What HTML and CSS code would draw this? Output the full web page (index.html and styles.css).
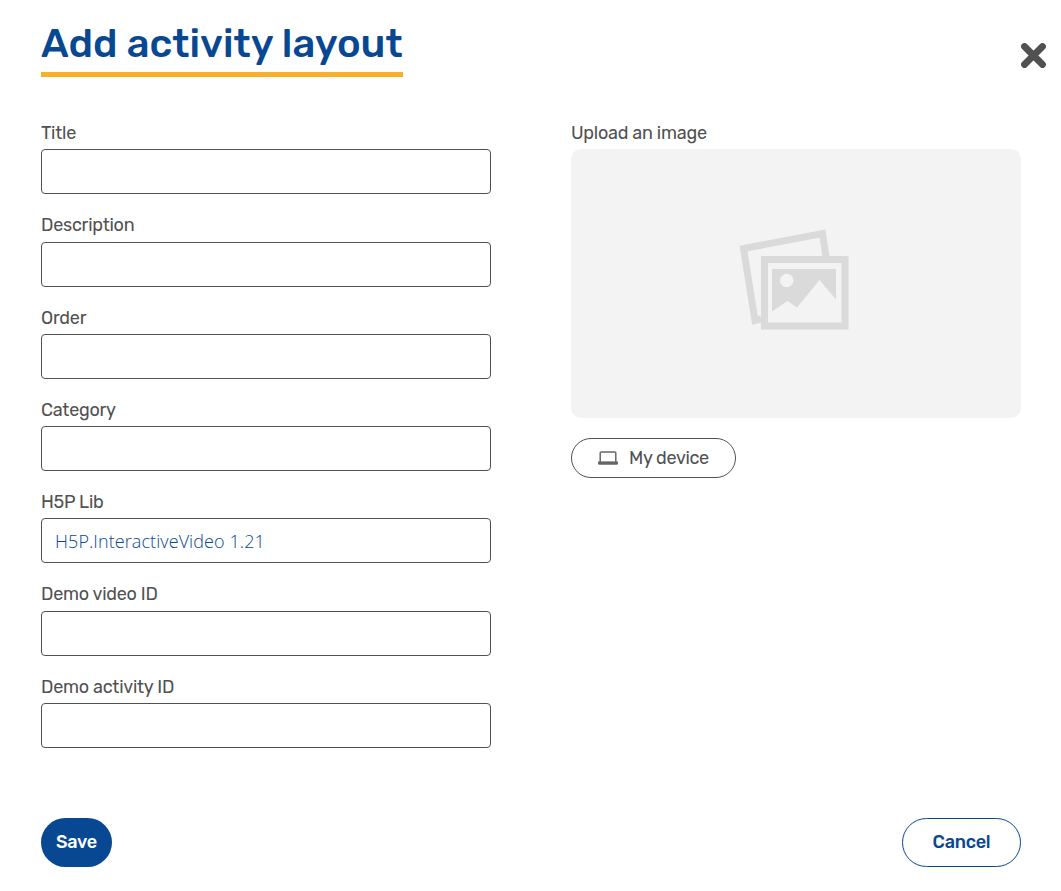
FILE: index.html
```html
<!DOCTYPE html>
<html lang="en">
<head>
<meta charset="utf-8">
<title>Add activity layout</title>
<link rel="stylesheet" href="styles.css">
</head>
<body>
<main class="dialog">
  <header class="dialog-header">
    <h1 class="dialog-title">Add activity layout</h1>
    <button class="close" type="button" aria-label="Close">
      <svg width="26" height="26" viewBox="0 0 26 26"><path d="M3.500 3.500L21.500 21.500M21.500 3.500L3.500 21.500" stroke="#515151" stroke-width="6.800" stroke-linecap="round"/></svg>
    </button>
  </header>
  <form class="form">
    <div class="columns">
      <div class="fields">
        <div class="field"><label class="label" for="title">Title</label><input class="input" id="title"></div>
        <div class="field"><label class="label" for="description">Description</label><input class="input" id="description"></div>
        <div class="field"><label class="label" for="order">Order</label><input class="input" id="order"></div>
        <div class="field"><label class="label" for="category">Category</label><input class="input" id="category"></div>
        <div class="field"><label class="label" for="lib">H5P Lib</label><input class="input" id="lib" value="H5P.InteractiveVideo 1.21"></div>
        <div class="field"><label class="label" for="video">Demo video ID</label><input class="input" id="video"></div>
        <div class="field"><label class="label" for="activity">Demo activity ID</label><input class="input" id="activity"></div>
      </div>
      <div class="upload">
        <span class="label">Upload an image</span>
        <div class="preview">
          <svg class="placeholder" width="130" height="120" viewBox="0 0 130 120">
            <path d="M31 99L25 100.500L13.500 28.500L92.500 13.500L98 50" fill="none" stroke="#dadada" stroke-width="7"/>
            <rect x="34.500" y="39.500" width="80.500" height="66.500" fill="#f3f3f3" stroke="#dadada" stroke-width="7"/>
            <path d="M42 49H106V79.500L89.500 60L67 87.500L57.500 81L42 91.500Z" fill="#dadada"/>
            <circle cx="56.700" cy="60.500" r="6.700" fill="#f3f3f3"/>
          </svg>
        </div>
        <button class="device" type="button">
          <svg width="20" height="14" viewBox="0 0 20 14"><rect x="2.200" y="1" width="15.600" height="10.500" rx="1" fill="none" stroke="#666" stroke-width="1.500"/><path d="M0 10.500H20V12.200Q20 13.700 18.500 13.700H1.500Q0 13.700 0 12.200Z" fill="#666"/></svg>
          <span class="device-text">My device</span>
        </button>
      </div>
    </div>
    <footer class="actions">
      <button class="save" type="button">Save</button>
      <button class="cancel" type="button">Cancel</button>
    </footer>
  </form>
</main>
</body>
</html>
```
FILE: styles.css
```css
* { box-sizing: border-box; }
body { margin: 0; background: #fff; color: #515151; font-family: Rubik, Roboto, sans-serif; }
button { padding: 0; font: inherit; background: none; border: 0; }
svg { display: block; flex: none; }
.dialog { height: 891px; overflow: hidden; padding: 15px 14px 0 41px; }
.dialog-header { display: flex; justify-content: space-between; height: 106px; }
.dialog-title { width: 362px; height: 62px; margin: 0; border-bottom: 5px solid #f7af2c; color: #084892; font-size: 40px; font-weight: 500; line-height: 57px; white-space: nowrap; }
.close { height: 26px; margin-top: 28px; }
.form { width: 980px; }
.columns { display: grid; grid-template-columns: 450px 450px; gap: 80px; height: 697px; }
.field { height: 92.3px; }
.label { display: block; height: 28.25px; font-size: 18px; line-height: 24px; letter-spacing: -0.25px; white-space: nowrap; }
.input { display: block; width: 450px; height: 45px; padding: 0 13px 0; border: 1px solid #515151; border-radius: 4px; background: #fff; color: #084892; font: 300 18px "Open Sans", sans-serif; letter-spacing: 0.08px; }
.preview { display: flex; width: 450px; height: 269px; padding: 71px 0 0 159px; border-radius: 10px; background: #f3f3f3; }
.device { display: flex; align-items: center; gap: 11px; width: 165px; height: 40px; margin-top: 20px; padding-left: 26px; border: 1px solid #515151; border-radius: 20px; color: #515151; font-size: 18px; letter-spacing: -0.35px; white-space: nowrap; }
.actions { display: flex; justify-content: space-between; }
.save, .cancel { height: 49px; padding-bottom: 2px; border-radius: 25px; font-size: 18px; font-weight: 500; letter-spacing: -0.25px; }
.save { width: 71px; background: #084892; color: #fff; }
.cancel { width: 119px; border: 1px solid #084892; color: #084892; }
```
